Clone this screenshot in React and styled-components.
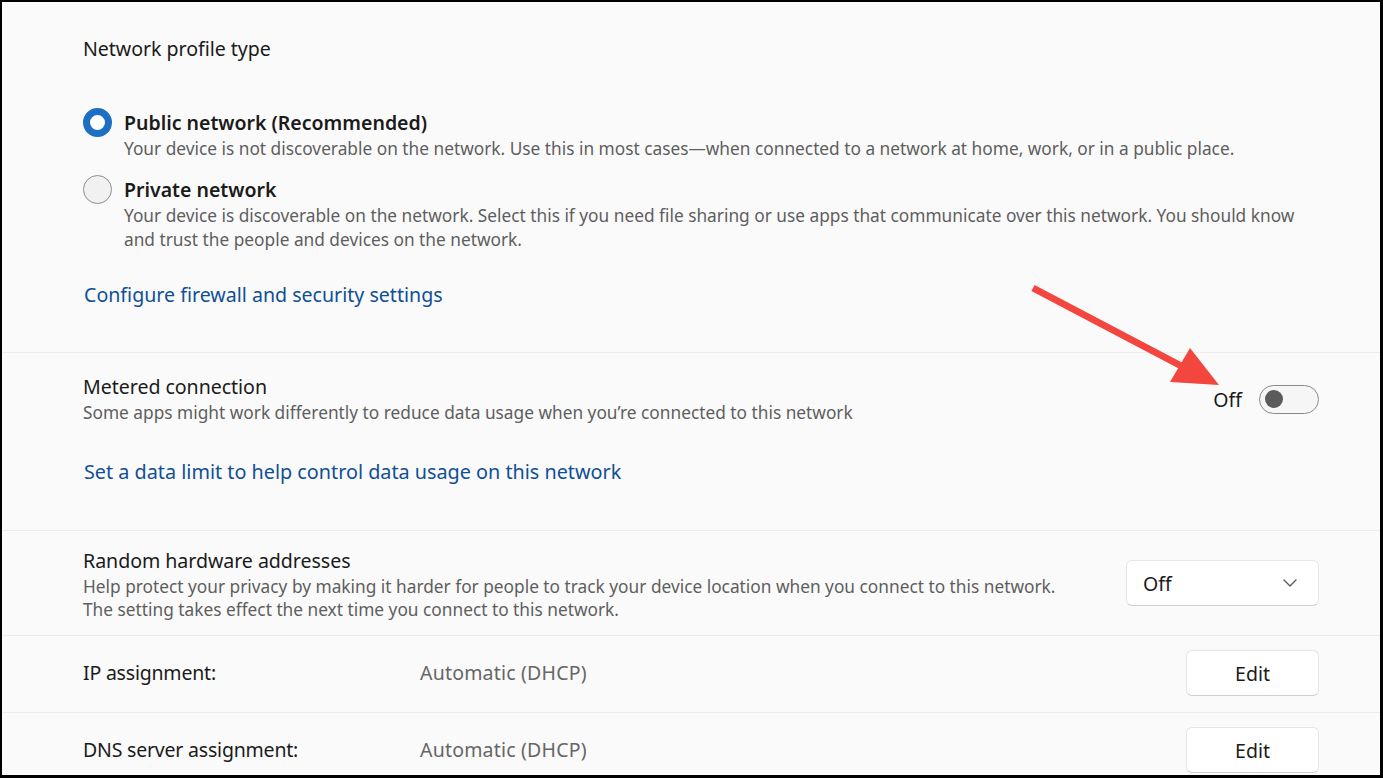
import React from 'react';
import styled, { createGlobalStyle } from 'styled-components';

const GlobalStyle = createGlobalStyle`
  html, body {
    margin: 0;
    padding: 0;
    background: #000;
  }
  body {
    font-family: "Noto Sans", "Open Sans", sans-serif;
  }
`;

const Frame = styled.div`
  position: relative;
  box-sizing: border-box;
  width: 1383px;
  height: 778px;
  overflow: hidden;
  border-style: solid;
  border-color: #000;
  border-width: 2px 3px 3px 2px;
  background: #fafafa;
  color: #1b1b1b;
`;

const Section = styled.section`
  box-sizing: border-box;
  padding: ${(p) => p.$pad || '0'};
  padding-left: 81px;
  padding-right: 61px;
  border-bottom: ${(p) => (p.$last ? 'none' : '1px solid #ececec')};
`;

const Heading = styled.div`
  font-size: 19.6px;
  line-height: 28px;
  color: #1b1b1b;
  letter-spacing: -0.05px;
`;

const OptionList = styled.div`
  display: flex;
  flex-direction: column;
  gap: 15px;
  margin-top: 46px;
`;

const Option = styled.label`
  display: flex;
  align-items: flex-start;
  gap: 12px;
`;

const Radio = styled.span`
  flex: none;
  box-sizing: border-box;
  width: 29px;
  height: 29px;
  margin-top: -1px;
  border-radius: 50%;
  border: ${(p) => (p.$checked ? '7px solid #1d6fc3' : '1.5px solid #8d8d8d')};
  background: ${(p) => (p.$checked ? '#fff' : '#f1f1f1')};
`;

const OptionText = styled.div`
  display: flex;
  flex-direction: column;
`;

const OptionTitle = styled.div`
  font-size: 19.5px;
  font-weight: 600;
  line-height: 28px;
  color: #1b1b1b;
`;

const Desc = styled.div`
  font-size: 17.3px;
  line-height: ${(p) => p.$lh || '24px'};
  color: #5e5e5e;
`;

const Link = styled.a`
  display: block;
  margin-top: ${(p) => p.$top};
  margin-left: 1px;
  font-size: ${(p) => p.$size || '19.8px'};
  line-height: 28px;
  color: #0f4f96;
  text-decoration: none;
`;

const SettingRow = styled.div`
  display: flex;
  align-items: center;
  justify-content: space-between;
`;

const SettingText = styled.div`
  display: flex;
  flex-direction: column;
`;

const ToggleWrap = styled.div`
  display: flex;
  align-items: center;
  gap: 17px;
  font-size: 19.5px;
  color: #1b1b1b;
`;

const Toggle = styled.span`
  box-sizing: border-box;
  display: flex;
  align-items: center;
  width: 60px;
  height: 29px;
  padding: 0 5px;
  border-radius: 15px;
  border: 1.5px solid #8a8a8a;
  background: #f6f6f6;

  &::before {
    content: '';
    width: 18px;
    height: 18px;
    border-radius: 50%;
    background: #5b5b5b;
  }
`;

const Dropdown = styled.div`
  box-sizing: border-box;
  display: flex;
  align-items: center;
  justify-content: space-between;
  width: 193px;
  height: 46px;
  margin-top: -2px;
  padding: 0 20px 0 16px;
  border-radius: 6px;
  background: #fff;
  border: 1px solid #e6e6e6;
  border-bottom-color: #cfcfcf;
  font-size: 19.5px;
  color: #1b1b1b;
`;

const InfoRow = styled.div`
  display: grid;
  grid-template-columns: 337px 1fr auto;
  align-items: center;
  height: 76px;
`;

const Label = styled.div`
  margin-bottom: 4px;
  font-size: 19.5px;
  color: #1b1b1b;
  letter-spacing: -0.2px;
`;

const Value = styled.div`
  margin-bottom: 4px;
  font-size: 19.5px;
  color: #666;
  letter-spacing: 0.2px;
`;

const Button = styled.button`
  box-sizing: border-box;
  width: 133px;
  height: 46px;
  margin-bottom: 2px;
  border-radius: 6px;
  background: #fff;
  border: 1px solid #e6e6e6;
  border-bottom-color: #cfcfcf;
  font-family: inherit;
  font-size: 19.5px;
  color: #1b1b1b;
  padding: 0;
`;

const Arrow = styled.svg`
  position: absolute;
  left: 0;
  top: 0;
  pointer-events: none;
`;

const Chevron = () => (
  <svg width="16" height="10" viewBox="0 0 16 10">
    <path d="M2 2 L8 8 L14 2" fill="none" stroke="#5a5a5a" strokeWidth="1.4" strokeLinecap="round" strokeLinejoin="round" />
  </svg>
);

export default function App() {
  return (
    <>
      <GlobalStyle />
      <Frame>
        <Section $pad="33px 61px 43px 81px">
          <Heading>Network profile type</Heading>
          <OptionList>
            <Option>
              <Radio $checked />
              <OptionText>
                <OptionTitle>Public network (Recommended)</OptionTitle>
                <Desc>
                  Your device is not discoverable on the network. Use this in most cases—when connected to a network at home, work, or in a public place.
                </Desc>
              </OptionText>
            </Option>
            <Option>
              <Radio />
              <OptionText>
                <OptionTitle>Private network</OptionTitle>
                <Desc>
                  Your device is discoverable on the network. Select this if you need file sharing or use apps that communicate over this network. You should know
                  <br />
                  and trust the people and devices on the network.
                </Desc>
              </OptionText>
            </Option>
          </OptionList>
          <Link $top="29px" $size="19.6px">Configure firewall and security settings</Link>
        </Section>

        <Section $pad="20px 61px 44px 81px">
          <SettingRow>
            <SettingText>
              <Heading>Metered connection</Heading>
              <Desc>Some apps might work differently to reduce data usage when you’re connected to this network</Desc>
            </SettingText>
            <ToggleWrap>
              Off
              <Toggle />
            </ToggleWrap>
          </SettingRow>
          <Link $top="33px">Set a data limit to help control data usage on this network</Link>
        </Section>

        <Section $pad="16px 61px 14px 81px">
          <SettingRow>
            <SettingText>
              <Heading>Random hardware addresses</Heading>
              <Desc $lh="23px">
                Help protect your privacy by making it harder for people to track your device location when you connect to this network.
                <br />
                The setting takes effect the next time you connect to this network.
              </Desc>
            </SettingText>
            <Dropdown>
              Off
              <Chevron />
            </Dropdown>
          </SettingRow>
        </Section>

        <Section>
          <InfoRow>
            <Label>IP assignment:</Label>
            <Value>Automatic (DHCP)</Value>
            <Button>Edit</Button>
          </InfoRow>
        </Section>

        <Section $last>
          <InfoRow>
            <Label>DNS server assignment:</Label>
            <Value>Automatic (DHCP)</Value>
            <Button>Edit</Button>
          </InfoRow>
        </Section>

        <Arrow width="1383" height="778" viewBox="0 0 1383 778">
          <line x1="1031" y1="286" x2="1185" y2="367" stroke="#f2463e" strokeWidth="7" />
          <polygon points="1168,380 1188,346 1217,383" fill="#f2463e" />
        </Arrow>
      </Frame>
    </>
  );
}
